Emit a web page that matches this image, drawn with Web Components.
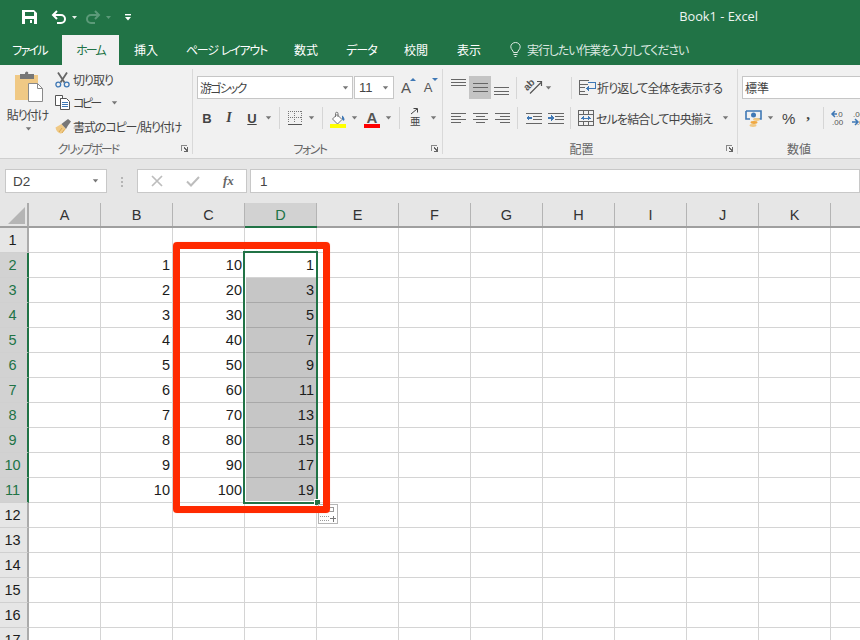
<!DOCTYPE html>
<html lang="ja"><head><meta charset="utf-8"><title>Book1 - Excel</title>
<style>
html,body{margin:0;padding:0;width:860px;height:640px;overflow:hidden;background:#e6e6e6}
body{font-family:"Noto Sans CJK JP","Noto Sans",sans-serif;font-size:12px}
</style></head><body>
<x-app></x-app>
<script>
const JP='"Noto Sans CJK JP","Noto Sans",sans-serif';
const lines=(rows,w=15,c='#666')=>{let s='';const h=Math.max(...rows.map(r=>r[0]))+1;rows.forEach(([y,x,l])=>s+=`<rect x="${x}" y="${y}" width="${l}" height="1" fill="${c}"/>`);return `<svg width="${w}" height="${h}" viewBox="0 0 ${w} ${h}" shape-rendering="crispEdges">${s}</svg>`};
const ICONS={
save:`<svg width="15" height="14" viewBox="0 0 15 14"><path fill="#fff" fill-rule="evenodd" d="M0 0h12l3 3v11H0zM3 2v4h9V2zM3 9v5h9V9z"/><rect x="8" y="10" width="2" height="3" fill="#fff"/></svg>`,
undo:`<svg width="16" height="14" viewBox="0 0 16 14" fill="none" stroke="#fff" stroke-width="2"><path d="M2 5h8a3.8 3.8 0 0 1 0 8H6"/><path d="M6 1L2 5l4 4"/></svg>`,
redo:`<svg width="16" height="14" viewBox="0 0 16 14" fill="none" stroke="#5c9a79" stroke-width="2"><path d="M14 5H6a3.8 3.8 0 0 0 0 8h4"/><path d="M10 1l4 4-4 4"/></svg>`,
cw:`<svg width="5" height="3" viewBox="0 0 5 3"><path fill="#e7f0ea" d="M0 0h5L2.500 3z"/></svg>`,
cd:`<svg width="5" height="3" viewBox="0 0 5 3"><path fill="#5c9a79" d="M0 0h5L2.500 3z"/></svg>`,
qat:`<svg width="6" height="7" viewBox="0 0 6 7"><rect width="6" height="1.400" fill="#fff"/><path fill="#fff" d="M0 3h6L3 6.500z"/></svg>`,
bulb:`<svg width="11" height="15" viewBox="0 0 11 15" fill="none" stroke="#dfeae4"><path d="M3.500 10.500C3.300 8.500.8 7.300.8 4.800a4.700 4.300 0 0 1 9.400 0c0 2.500-2.500 3.700-2.700 5.700z"/><path d="M3.500 12.500h4M4.500 14.500h2"/></svg>`,
paste:`<svg width="30" height="31" viewBox="0 0 30 31"><path fill="#f0c985" d="M1 3h23v25H1z"/><path fill="#777" d="M6 2h5V1a2 2 0 0 1 3-1 2 2 0 0 1 0 2h6v5H6z"/><path fill="#fff" stroke="#8a8a8a" d="M14.500 11.500h9l5 5v13h-14z"/><path fill="none" stroke="#8a8a8a" d="M23.500 11.500v5h5"/></svg>`,
scissors:`<svg width="15" height="16" viewBox="0 0 15 16" fill="none"><path stroke="#666" stroke-width="1.800" d="M3 .5l6.500 10M12 .5L5.500 10.500"/><circle cx="3.300" cy="12.500" r="2.400" stroke="#3f78b5" stroke-width="1.300"/><circle cx="11.700" cy="12.500" r="2.400" stroke="#3f78b5" stroke-width="1.300"/></svg>`,
copy:`<svg width="16" height="15" viewBox="0 0 16 15" fill="#fff"><path stroke="#555" d="M.5.500h7v3h-2v7h-5z"/><path stroke="#555" d="M5.500 3.500h6l3 3v8h-9z"/><path stroke="#3f78b5" d="M7 7.500h6M7 9.500h6M7 11.500h6" fill="none"/></svg>`,
brush:`<svg width="17" height="15" viewBox="0 0 17 15"><path fill="#f0c985" d="M.5 8.500L6.500 5l4.500 5-5 4.800C3.500 14.300 1 12 .5 8.500z"/><path stroke="#d9a850" fill="none" d="M4 13l3-4M7 14l2.500-3.500"/><path fill="#777" d="M6.500 5L9 3l4-3 3 2.500-3 4-2 3.500z"/></svg>`,
launcher:`<svg width="8" height="7" viewBox="0 0 8 7" shape-rendering="crispEdges"><path fill="none" stroke="#888" d="M.5 6V.5H6"/><path fill="#666" d="M3 2h1v1h1v1h1V2h1v5H3V6h2V5H4V4H3z"/></svg>`,
borders:`<svg width="14" height="14" viewBox="0 0 14 14" shape-rendering="crispEdges" fill="none"><path stroke="#777" stroke-dasharray="1 1" d="M.5 0v12M6.500 0v12M13.500 0v12M0 .5h14M0 6.500h14"/><path stroke="#555" d="M0 13.500h14"/></svg>`,
fill:`<svg width="16" height="16" viewBox="0 0 16 16"><path fill="#fff" stroke="#777" d="M2.500 7L7 2.500l5 5L7.500 12z"/><path stroke="#777" fill="none" d="M5.500 5V1.500a1.200 1.200 0 0 1 2.500 0V5"/><path fill="#3f78b5" d="M12 3.500c1.500 1 2.500 2.500 2.500 4 0 1-1 1.500-1.500 1s-.5-1-1-1.500z"/><rect y="12" width="16" height="4" fill="#ffff00"/></svg>`,
atop:lines([[0,0,15],[3,0,15],[6,0,15]]),
amid:lines([[0,0,15],[4,0,15],[8,0,15]]),
abot:lines([[0,0,15],[4,0,15],[7,0,15]]),
aleft:lines([[0,0,15],[3,0,10],[6,0,15],[9,0,10]]),
acen:lines([[0,0,15],[3,3,9],[6,0,15],[9,3,9]]),
aright:lines([[0,0,15],[3,5,10],[6,0,15],[9,5,10]]),
orient:`<svg width="17" height="16" viewBox="0 0 17 16" fill="none"><text x="0" y="10" transform="rotate(-45 5 9)" font-family="Liberation Sans" font-size="10" font-weight="700" fill="#555">ab</text><path stroke="#555" stroke-width="1.200" d="M5 15.500L16 4.500M12 3.500h4.500V8"/></svg>`,
outdent:`<svg width="16" height="11" viewBox="0 0 16 11" shape-rendering="crispEdges"><path stroke="#666" d="M0 .5h16M7 3.500h9M7 6.500h9M0 10.500h16"/><path fill="#3f78b5" d="M0 5l3-3v2h3v2H3v2z"/></svg>`,
indent:`<svg width="16" height="11" viewBox="0 0 16 11" shape-rendering="crispEdges"><path stroke="#666" d="M0 .5h16M7 3.500h9M7 6.500h9M0 10.500h16"/><path fill="#3f78b5" d="M6 5L3 2v2H0v2h3v2z"/></svg>`,
wrap:`<svg width="16" height="15" viewBox="0 0 16 15" fill="none" shape-rendering="crispEdges"><path stroke="#666" d="M.5 0v15M.5 .5h9M.5 7.500h5M.5 14.500h8M.5 4.500h8M.5 11.500h5"/><path stroke="#3f78b5" d="M9 2.500h7v6H8"/><path fill="#3f78b5" d="M7 8.500l3-3v6z"/></svg>`,
merge:`<svg width="16" height="16" viewBox="0 0 16 16" fill="none" shape-rendering="crispEdges"><path stroke="#666" d="M.5.500h15v15H.5zM0 4.500h16M0 11.500h16M5.500 0v4M10.500 0v4M5.500 12v4M10.500 12v4"/><path stroke="#3f78b5" d="M3 8h10"/><path fill="#3f78b5" d="M3 8l3-2.500v5zM13 8l-3-2.500v5z"/></svg>`,
money:`<svg width="17" height="17" viewBox="0 0 17 17"><path fill="none" stroke="#3f78b5" stroke-width="1.600" d="M1 1h15v8H9.500M1 1v8h4"/><circle cx="8.500" cy="5" r="2.500" fill="#3f78b5"/><ellipse cx="11.500" cy="9.500" rx="3.500" ry="1.400" fill="#f0c985"/><ellipse cx="9" cy="12.500" rx="3.500" ry="1.400" fill="#f0a840"/><ellipse cx="8" cy="15.500" rx="3.500" ry="1.400" fill="#f0c985"/></svg>`,
decl:`<svg width="15" height="16" viewBox="0 0 15 16"><text x="5" y="7" font-family="Liberation Sans" font-size="8" fill="#555">.0</text><text x="1" y="15" font-family="Liberation Sans" font-size="8" fill="#555">.00</text><path stroke="#3f78b5" stroke-width="1.500" fill="none" d="M1 4h5M4 1L1 4l3 3"/></svg>`,
decr:`<svg width="15" height="16" viewBox="0 0 15 16"><text x="1" y="7" font-family="Liberation Sans" font-size="8" fill="#555">.00</text><text x="5" y="15" font-family="Liberation Sans" font-size="8" fill="#555">.0</text><path stroke="#3f78b5" stroke-width="1.500" fill="none" d="M0 12h5M3 9l3 3-3 3"/></svg>`,
phon:`<svg width="11" height="20" viewBox="0 0 11 20"><text x="0" y="17" font-family="Noto Sans CJK JP" font-size="10.500" fill="#444">亜</text><path stroke="#444" fill="none" d="M1 6l6-5M3.500.500H7.500v4"/></svg>`,
x:`<svg width="12" height="12" viewBox="0 0 12 12"><path stroke="#bdbdbd" stroke-width="1.700" fill="none" d="M1 1l10 10M11 1L1 11"/></svg>`,
check:`<svg width="14" height="11" viewBox="0 0 14 11"><path stroke="#bdbdbd" stroke-width="2" fill="none" d="M1 5.500l4 4 8-8.500"/></svg>`,
dots:`<svg width="3" height="11" viewBox="0 0 3 11" fill="#b5b5b5"><rect width="2" height="2"/><rect y="4" width="2" height="2"/><rect y="8" width="2" height="2"/></svg>`,
paste2:`<svg width="18" height="17" viewBox="0 0 18 17" fill="none" shape-rendering="crispEdges"><path stroke="#999" d="M6.500 1.500h8v4h-8z"/><path stroke="#999" stroke-dasharray="1 1" d="M1 10.500h9M1 14.500h9"/><path stroke="#777" d="M11 12.500h6M14 9.500v6"/></svg>`,
corner:`<svg width="17" height="17" viewBox="0 0 17 17"><path fill="#b5b5b5" d="M17 0v17H0z"/></svg>`,
caret:`<svg width="7" height="4" viewBox="0 0 7 4"><path fill="#777" d="M.8.300h5.400L3.500 3.500z"/></svg>`,
};

function def(name,css,html){
  customElements.define(name,class extends HTMLElement{
    constructor(){super();const r=this.attachShadow({mode:'open'});r.innerHTML=`<style>${css}</style>${typeof html==='function'?html(this):html}`}
  });
}
customElements.define('x-ico',class extends HTMLElement{
  connectedCallback(){ if(this.shadowRoot)return; const r=this.attachShadow({mode:'open'});
    r.innerHTML=`<style>:host{display:inline-flex;flex:none;line-height:0}svg{display:block;overflow:visible}</style>${ICONS[this.getAttribute('n')]||''}`}
});
customElements.define('x-group',class extends HTMLElement{
  connectedCallback(){ if(this.shadowRoot)return; const r=this.attachShadow({mode:'open'});
   const l=this.hasAttribute('launch');
   r.innerHTML=`<style>
   :host{display:flex;flex-direction:column;flex:none;height:85px;box-sizing:border-box;border-right:1px solid #d9d9d9;width:${this.getAttribute('w')}px}
   .c{height:72px;flex:none}
   .l{height:16px;line-height:16px;text-align:center;color:#666;font-size:12px;position:relative;padding-right:${this.getAttribute('lp')||0}px;letter-spacing:${this.getAttribute('ls')||0}px}
   x-ico{position:absolute;right:3px;top:4px}
   </style><div class="c"><slot></slot></div><div class="l">${this.getAttribute('label')}${l?'<x-ico n="launcher"></x-ico>':''}</div>`}
});

def('x-title-bar',`
:host{display:flex;align-items:center;height:35px;background:#217346;color:#fff;padding-left:22px;box-sizing:border-box;flex:none}
.t{margin-left:auto;margin-right:102px;font:12.800px "Open Sans","Noto Sans",sans-serif;color:#f0f5f2;line-height:16px;margin-top:-4px}
.q{display:flex;align-items:center;margin-top:-1px}
`,`<div class="q"><x-ico n="save"></x-ico><x-ico n="undo" style="margin-left:14px"></x-ico><x-ico n="cw" style="margin-left:5px"></x-ico><x-ico n="redo" style="margin-left:8px"></x-ico><x-ico n="cd" style="margin-left:5px"></x-ico><x-ico n="qat" style="margin-left:14px"></x-ico></div><div class="t">Book1 - Excel</div>`);

def('x-tab',`
:host{display:flex;align-items:center;justify-content:center;height:30px;color:#fff;font-size:12px;font-feature-settings:"palt";white-space:nowrap;flex:none;padding-bottom:1px;box-sizing:border-box}
:host([on]){background:#f1f1f1;color:#217346}
`,`<slot></slot>`);
def('x-tab-bar',`
:host{display:flex;height:30px;background:#217346;flex:none}
.tell{display:flex;align-items:center;color:#dbe8e0;font-size:12px;font-feature-settings:"palt";margin-left:13px;gap:6px;white-space:nowrap;padding-bottom:1px;letter-spacing:-1.100px}
`,`<x-tab style="width:59px;margin-right:3px;letter-spacing:-1.750px">ファイル</x-tab><x-tab on style="width:57px;letter-spacing:-2px">ホーム</x-tab><x-tab style="width:54px">挿入</x-tab><x-tab style="width:107px;letter-spacing:-1.200px">ページ&nbsp;&nbsp;レイアウト</x-tab><x-tab style="width:52px">数式</x-tab><x-tab style="width:59px;letter-spacing:-1px">データ</x-tab><x-tab style="width:50px">校閲</x-tab><x-tab style="width:56px">表示</x-tab><div class="tell"><x-ico n="bulb"></x-ico><span>実行したい作業を入力してください</span></div>`);

def('x-ribbon',`
:host{display:flex;height:94px;box-sizing:border-box;padding-top:4px;background:#f1f1f1;border-bottom:1px solid #cfcfcf;color:#444;flex:none;overflow:hidden;font-size:12px;font-feature-settings:"palt"}
.clip{display:flex;height:72px}
.paste{width:55px;display:flex;flex-direction:column;align-items:center;padding-top:3px;box-sizing:border-box;flex:none}
.paste x-ico:first-child{margin-left:3px}
.paste span{margin-top:3px;line-height:18px;white-space:nowrap;letter-spacing:-1px}
.paste x-ico:last-child{margin-top:3px;margin-left:2px}
.small{display:flex;flex-direction:column;margin-top:-1px}
.small div{display:flex;align-items:center;height:23px;white-space:nowrap}
.small .ic{width:18px;display:flex}
.rows{padding-top:7px;display:flex;flex-direction:column;gap:7px;box-sizing:border-box}
.row{display:flex;align-items:center;height:23px;white-space:nowrap}
.row2{height:24px}
.sel{box-sizing:border-box;height:23px;background:#fff;border:1px solid #c6c6c6;display:flex;align-items:center;padding:0 3px 0 2px;justify-content:space-between;flex:none}
.sep{width:1px;height:22px;background:#d6d6d6;flex:none}
.gb{width:20px;text-align:center;font:700 13px "Liberation Sans",sans-serif;color:#444;flex:none}
.gi{font:italic 700 14px "Liberation Serif",serif}
.gu{text-decoration:underline}
.ga{position:relative;font:15px "Liberation Sans",sans-serif;color:#555;flex:none;width:14px;text-align:center;line-height:20px}
.ga i{position:absolute;right:-3px;top:0;border:3px solid transparent;border-top:0;border-bottom:3px solid #3f78b5}
.ga i.d{border-bottom:0;border-top:3px solid #3f78b5}
.colA{display:flex;flex-direction:column;width:16px;align-items:center;flex:none}
.colA b{font:700 15px/12px "Liberation Sans",sans-serif;color:#555}
.colA i{width:16px;height:4px;background:#f00;display:block}
.hl{width:22px;height:23px;background:#c4c4c4;display:flex;align-items:center;justify-content:center;flex:none}
.pct{font:15px "Liberation Sans",sans-serif;color:#444;flex:none}
.cm{font:700 15px "Liberation Serif",serif;color:#444;flex:none}
.ls1{letter-spacing:-.85px}
`,`
<x-group w="193" label="クリップボード" launch lp="16" ls="-1.900">
 <div class="clip">
  <div class="paste"><x-ico n="paste"></x-ico><span>貼り付け</span><x-ico n="caret"></x-ico></div>
  <div class="small">
   <div><span class="ic"><x-ico n="scissors"></x-ico></span><span style="letter-spacing:-1px">切り取り</span></div>
   <div><span class="ic"><x-ico n="copy"></x-ico></span><span style="letter-spacing:-2.600px">コピー</span><x-ico n="caret" style="margin-left:11px"></x-ico></div>
   <div style="height:24px"><span class="ic"><x-ico n="brush"></x-ico></span><span style="letter-spacing:-1.100px">書式のコピー/貼り付け</span></div>
  </div>
 </div>
</x-group>
<x-group w="250" label="フォント" launch lp="15" ls="-1.500">
 <div class="rows" style="padding-left:4px">
  <div class="row">
   <div class="sel" style="width:156px"><span style="letter-spacing:-1.800px">游ゴシック</span><x-ico n="caret"></x-ico></div>
   <div class="sel" style="width:40px;margin-left:1px;padding-left:4px;font-family:'Liberation Sans',sans-serif;font-size:13px"><span>11</span><x-ico n="caret" style="margin-right:1px"></x-ico></div>
   <div class="ga" style="margin-left:5px">A<i></i></div>
   <div class="ga" style="margin-left:8px;font-size:13px">A<i class="d"></i></div>
  </div>
  <div class="row row2">
   <div class="gb">B</div><div class="gb gi" style="margin-left:2px">I</div><div class="gb gu" style="margin-left:3px">U</div>
   <x-ico n="caret" style="margin-left:3px"></x-ico>
   <div class="sep" style="margin-left:7px"></div>
   <x-ico n="borders" style="margin-left:8px"></x-ico><x-ico n="caret" style="margin-left:6px"></x-ico>
   <div class="sep" style="margin-left:7px"></div>
   <x-ico n="fill" style="margin-left:7px;margin-top:4px"></x-ico><x-ico n="caret" style="margin-left:5px"></x-ico>
   <div class="colA" style="margin-left:6px;margin-top:4px"><b>A</b><i></i></div><x-ico n="caret" style="margin-left:5px"></x-ico>
   <div class="sep" style="margin-left:7px"></div>
   <x-ico n="phon" style="margin-left:10px"></x-ico><x-ico n="caret" style="margin-left:9px"></x-ico>
  </div>
 </div>
</x-group>
<x-group w="295" label="配置" launch lp="17">
 <div class="rows" style="padding-left:8px">
  <div class="row">
   <x-ico n="atop" style="margin-top:-10px"></x-ico>
   <div class="hl" style="margin-left:3px"><x-ico n="amid"></x-ico></div>
   <x-ico n="abot" style="margin-left:3px;margin-top:7px"></x-ico>
   <div class="sep" style="margin-left:7px"></div>
   <x-ico n="orient" style="margin-left:8px;margin-top:-3px"></x-ico><x-ico n="caret" style="margin-left:3px"></x-ico>
   <div class="sep" style="margin-left:19px"></div>
   <x-ico n="wrap" style="margin-left:7px"></x-ico><span class="ls1" style="margin-left:2px">折り返して全体を表示する</span>
  </div>
  <div class="row row2">
   <x-ico n="aleft"></x-ico><x-ico n="acen" style="margin-left:7px"></x-ico><x-ico n="aright" style="margin-left:7px"></x-ico>
   <div class="sep" style="margin-left:7px"></div>
   <x-ico n="outdent" style="margin-left:8px"></x-ico><x-ico n="indent" style="margin-left:6px"></x-ico>
   <div class="sep" style="margin-left:6px"></div>
   <x-ico n="merge" style="margin-left:7px"></x-ico><span class="ls1" style="margin-left:2px">セルを結合して中央揃え</span><x-ico n="caret" style="margin-left:10px"></x-ico>
  </div>
 </div>
</x-group>
<x-group w="160" label="数値" lp="38" style="border-right:0">
 <div class="rows" style="padding-left:4px">
  <div class="row"><div class="sel" style="width:160px"><span>標準</span></div></div>
  <div class="row row2">
   <x-ico n="money" style="margin-left:3px"></x-ico><x-ico n="caret" style="margin-left:5px"></x-ico>
   <span class="pct" style="margin-left:8px">%</span><span class="cm" style="margin-left:11px;margin-top:-7px">,</span>
   <div class="sep" style="margin-left:13px"></div>
   <x-ico n="decl" style="margin-left:7px"></x-ico><x-ico n="decr" style="margin-left:6px"></x-ico>
  </div>
 </div>
</x-group>`);

def('x-formula-bar',`
:host{display:flex;height:44px;box-sizing:border-box;padding:10px 0 0 5px;background:#e6e6e6;flex:none;overflow:hidden;color:#444}
.b{height:24px;box-sizing:border-box;background:#fff;border:1px solid #c8c8c8;display:flex;align-items:center;flex:none;font:13.500px "Liberation Sans",sans-serif}
.fx{font:italic 700 13px "Liberation Serif",serif;color:#666}
`,`<div class="b" style="width:102px;padding:0 7px;justify-content:space-between"><span>D2</span><x-ico n="caret"></x-ico></div>
<x-ico n="dots" style="margin:8px 0 0 14px;height:11px"></x-ico>
<div class="b" style="width:110px;margin-left:13px;padding-left:13px"><x-ico n="x"></x-ico><x-ico n="check" style="margin-left:23px"></x-ico><span class="fx" style="margin-left:23px">fx</span></div>
<div class="b" style="flex:1;margin-left:3px;padding-left:9px">1</div>`);

def('x-sheet',`
:host{display:block;position:relative;height:437px;background:#fff;overflow:hidden;font:14.500px "Liberation Sans",sans-serif;color:#1c1c1c;flex:none}
.g{display:grid;grid-template-columns:29px repeat(4,72px) 82px repeat(6,72px) 72px;grid-auto-rows:25px;width:max-content}
.g>div{box-sizing:border-box;display:flex;align-items:center;white-space:nowrap}
.cor{background:#e6e6e6;border-right:2px solid #ababab;border-bottom:2px solid #9f9f9f;padding:4px 0 0 8px;align-items:flex-start!important}
.ch{background:#e6e6e6;border-bottom:2px solid #9f9f9f;justify-content:center;position:relative;color:#333;padding-right:1px}
.ch::after{content:"";position:absolute;right:0;top:0;bottom:0;width:1px;background:#b4b4b4}
.ch.a{background:#d2d2d2;color:#217346;border-bottom:2px solid #217346}
.rh{background:#e6e6e6;border-right:2px solid #ababab;border-bottom:1px solid #d0d0d0;justify-content:center;padding-right:2px}
.rh.a{background:#d2d2d2;color:#217346;border-right:2px solid #217346}
.c{border-right:1px solid #d4d4d4;border-bottom:1px solid #d4d4d4;justify-content:flex-end;padding-right:2px}
.c.s{background:#c6c6c6;border-bottom-color:#a8a8a8;border-right-color:#c6c6c6}
.sel{position:absolute;left:243px;top:48px;width:75px;height:253px;box-sizing:border-box;border:2px solid #217346;box-shadow:inset 1px 1px 0 #fff,inset 0 -1px 0 #fff}
.h{position:absolute;left:314px;top:296px;width:6px;height:6px;box-sizing:border-box;background:#217346;border:1px solid #fff;border-right:0;border-bottom:0}
.p{position:absolute;left:318px;top:301px;width:20px;height:20px;box-sizing:border-box;background:#fff;border:1px solid #b5b5b5;display:flex;align-items:center;justify-content:center}
.red{position:absolute;left:173px;top:39px;width:157px;height:271px;box-sizing:border-box;border:7px solid #ff2a00;border-radius:4px;box-shadow:0 0 1px #ff9a80}
`,()=>{
 const cols='ABCDEFGHIJKL'.split('');
 let h='<div class="g"><div class="cor"><x-ico n="corner"></x-ico></div>';
 cols.forEach(c=>h+=`<div class="ch${c==='D'?' a':''}">${c==='L'?'':c}</div>`);
 for(let r=1;r<=17;r++){
  const a=r>=2&&r<=11;
  h+=`<div class="rh${a?' a':''}">${r}</div>`;
  cols.forEach(c=>{
   let v='',s='';
   if(a){const n=r-1; if(c==='B')v=n; if(c==='C')v=n*10; if(c==='D'){v=2*n-1; if(r>2)s=' s';}}
   h+=`<div class="c${s}">${v}</div>`;
  });
 }
 return h+'</div><div class="sel"></div><div class="h"></div><div class="p"><x-ico n="paste2"></x-ico></div><div class="red"></div>';
});

def('x-app',`:host{display:flex;flex-direction:column;width:860px;height:640px;overflow:hidden;font-family:${JP}}`,
`<x-title-bar></x-title-bar><x-tab-bar></x-tab-bar><x-ribbon></x-ribbon><x-formula-bar></x-formula-bar><x-sheet></x-sheet>`);
</script>
</body></html>
